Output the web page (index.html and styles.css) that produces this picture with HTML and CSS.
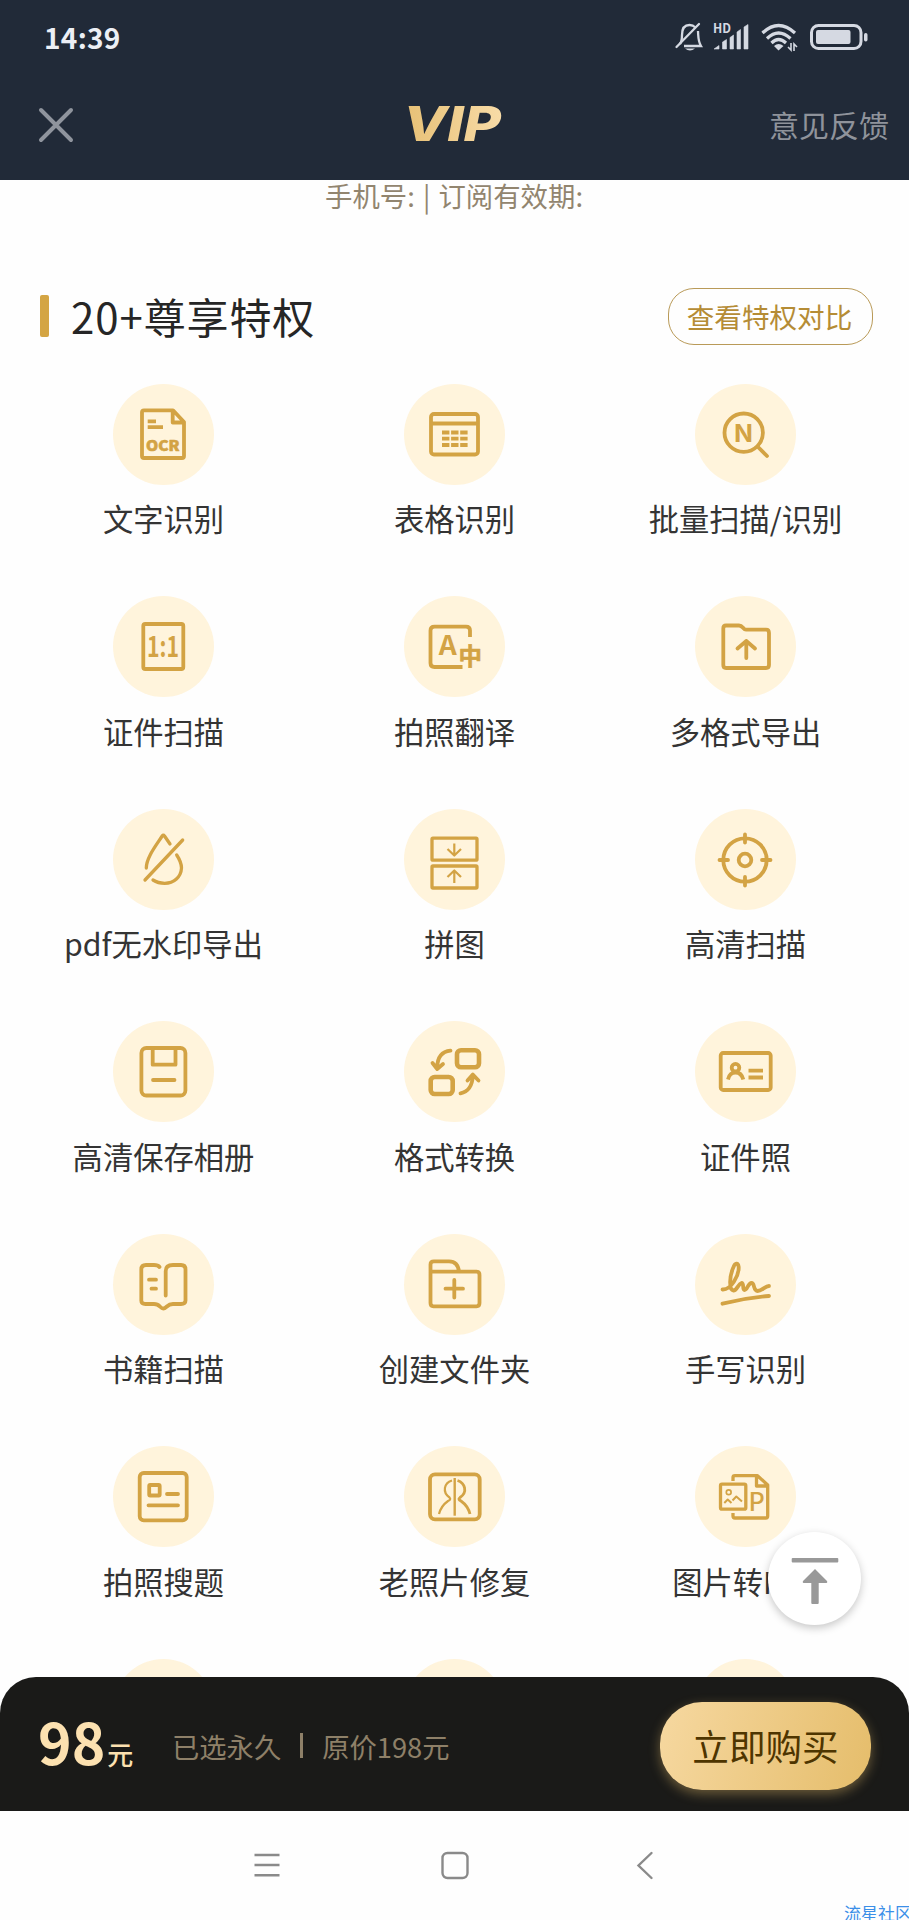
FILE: index.html
```html
<!DOCTYPE html>
<html lang="zh-CN">
<head>
    <meta charset="UTF-8">
    <title>VIP</title>
    <link rel="stylesheet" href="styles.css">
</head>
<body>
<div class="page">
    <header class="header">
        <div class="status-bar">
            <span class="time">14:39</span>
            <div class="status-icons">
                <svg class="bell" width="28" height="30" viewBox="0 0 28 30">
                    <path d="M5 22C7 19 7 16 7 13C7 6 10 3 14.500 3C17 3 19 4 20.500 5.500M23 9C23.500 17 23 19 26 24H9" fill="none" stroke="#d5d9e2" stroke-width="2.300"/>
                    <path d="M1.500 25L24 2" stroke="#d5d9e2" stroke-width="2.300" stroke-linecap="round"/>
                    <path d="M10 26.500H20Q15 30.500 10 26.500Z" fill="#d5d9e2"/>
                </svg>
                <svg class="signal" width="36" height="30" viewBox="0 0 36 30">
                    <text x="0" y="10.500" class="hd" textLength="18" lengthAdjust="spacingAndGlyphs">HD</text>
                    <path d="M1 27L6 23.500V27ZM9.500 27V20L13.500 17.500V27ZM17 27V15.500L20.500 13V27ZM24 27V10L27.500 7.500V27ZM31 27V5L35 2.500V27Z" fill="#d5d9e2" stroke="#d5d9e2" stroke-width=".600"/>
                </svg>
                <svg class="wifi" width="37" height="30" viewBox="0 0 37 30">
                    <g fill="none" stroke="#d5d9e2" stroke-width="3.200">
                        <path d="M1.500 11Q17.500 -4 34 11"/>
                        <path d="M6 16.500Q17.500 5.500 29.500 16.500"/>
                        <path d="M10.500 21Q17.500 14 25 21"/>
                    </g>
                    <path d="M13 24Q17.500 20 22.500 24L17.500 28.500Z" fill="#d5d9e2"/>
                    <path d="M30 21V28L27 25M33 29V22L36 25" fill="none" stroke="#d5d9e2" stroke-width="1.600"/>
                </svg>
                <svg class="battery" width="59" height="30" viewBox="0 0 59 30">
                    <rect x="1.500" y="3.500" width="49.500" height="23" rx="7" fill="none" stroke="#d5d9e2" stroke-width="3"/>
                    <rect x="6" y="8" width="34.500" height="14" rx="2" fill="#d5d9e2"/>
                    <rect x="54" y="11" width="3.500" height="8.500" rx="1.700" fill="#d5d9e2"/>
                </svg>
            </div>
        </div>
        <div class="nav-bar">
            <svg class="close" width="36" height="36" viewBox="0 0 36 36">
                <path d="M3 3L33 33M33 3L3 33" stroke="#8f949d" stroke-width="4" stroke-linecap="round"/>
            </svg>
            <svg class="logo" width="96" height="40" viewBox="0 0 96 40">
                <defs>
                    <linearGradient id="gold" x1="0" x2="1">
                        <stop offset="0" stop-color="#e7c075"/>
                        <stop offset="1" stop-color="#f8dca8"/>
                    </linearGradient>
                </defs>
                <text x="-4" y="36" class="logo-text" fill="url(#gold)" textLength="98" lengthAdjust="spacingAndGlyphs">VIP</text>
            </svg>
            <a class="feedback">意见反馈</a>
        </div>
    </header>

    <main class="content">
        <p class="user-info">手机号: | 订阅有效期:</p>
        <div class="section-title">
            <h2>20+尊享特权</h2>
            <button class="compare-btn">查看特权对比</button>
        </div>

        <div class="grid">
            <div class="item">
                <svg class="icon" viewBox="0 0 101 101">
                    <path d="M31 26.300H60L71 38V72Q71 74 69 74H31Q29 74 29 72V28.300Q29 26.300 31 26.300ZM59.700 27V38.500H71"/>
                    <path d="M34.700 37.300H43M34.700 43.200H50"/>
                    <text x="33" y="67" font-size="14.500" font-weight="900" textLength="33.500" lengthAdjust="spacingAndGlyphs" class="bold">OCR</text>
                </svg>
                <span>文字识别</span>
            </div>
            <div class="item">
                <svg class="icon" viewBox="0 0 101 101">
                    <rect x="27" y="30" width="47" height="40.500" rx="3"/>
                    <path d="M27 39.500H74"/>
                    <path d="M38 48.500H63.700M38 54.700H63.700M38 61H63.700" stroke-dasharray="7.400 1.700"/>
                </svg>
                <span>表格识别</span>
            </div>
            <div class="item">
                <svg class="icon" viewBox="0 0 101 101">
                    <circle cx="48.700" cy="48.700" r="19.200"/>
                    <path d="M63 63L72 72" stroke-linecap="round"/>
                    <text x="38.200" y="57.700" font-size="24.500" font-weight="700" textLength="20.500" lengthAdjust="spacingAndGlyphs">N</text>
                </svg>
                <span>批量扫描/识别</span>
            </div>

            <div class="item">
                <svg class="icon" viewBox="0 0 101 101">
                    <rect x="30.300" y="28" width="40" height="45" rx="2"/>
                    <text x="34" y="61.300" font-size="28" font-weight="700" textLength="32" lengthAdjust="spacingAndGlyphs">1:1</text>
                </svg>
                <span>证件扫描</span>
            </div>
            <div class="item">
                <svg class="icon" viewBox="0 0 101 101">
                    <path d="M66 41V34.500Q66 30.700 62 30.700H30.500Q26.500 30.700 26.500 34.500V67Q26.500 71 30.500 71H58.500"/>
                    <text x="34.700" y="59.300" font-size="27" font-weight="700" textLength="18" lengthAdjust="spacingAndGlyphs">A</text>
                    <text x="54.500" y="69" font-size="23.500" font-weight="700" class="bold">中</text>
                </svg>
                <span>拍照翻译</span>
            </div>
            <div class="item">
                <svg class="icon" viewBox="0 0 101 101">
                    <path d="M31 29.500H44C48 29.500 48 33.700 51 33.700H71Q74 33.700 74 37V69Q74 72 71 72H31Q28.300 72 28.300 69V32.500Q28.300 29.500 31 29.500Z"/>
                    <path d="M51.300 62V45M42.500 52.500L51.300 45L60 52.500" stroke-linecap="round"/>
                </svg>
                <span>多格式导出</span>
            </div>

            <div class="item">
                <svg class="icon thin" viewBox="0 0 101 101">
                    <path d="M57 35L51.500 27Q50.300 25.500 49.200 27C42 38 33.300 49 33.300 59" stroke-linecap="round"/>
                    <path d="M69.700 31L32 71" stroke-linecap="round"/>
                    <path d="M63.700 46C67 51 68.500 55 68.500 59C68 68 61 74.300 51.700 74.300Q45 74.300 40 71" stroke-linecap="round"/>
                </svg>
                <span>pdf无水印导出</span>
            </div>
            <div class="item">
                <svg class="icon thin" viewBox="0 0 101 101">
                    <rect x="28" y="29.200" width="45" height="22" rx="1"/>
                    <rect x="28" y="57" width="45" height="22" rx="1"/>
                    <path d="M50.300 34.500V46M43.500 40L50.300 46.500L57 40M50.300 74V62M43.500 68L50.300 61.500L57 68" stroke-width="2.200"/>
                </svg>
                <span>拼图</span>
            </div>
            <div class="item">
                <svg class="icon" viewBox="0 0 101 101">
                    <circle cx="50" cy="51" r="21.700"/>
                    <circle cx="50" cy="51" r="6.300"/>
                    <path d="M50 25.500V33.500M50 68V76.500M24.500 51H33M67 51H75.500" stroke-linecap="round"/>
                </svg>
                <span>高清扫描</span>
            </div>

            <div class="item">
                <svg class="icon" viewBox="0 0 101 101">
                    <rect x="28.400" y="27" width="44" height="47.500" rx="5"/>
                    <path d="M39.700 27V43.700H62.500V27"/>
                    <path d="M40 59H61.500" stroke-linecap="round"/>
                </svg>
                <span>高清保存相册</span>
            </div>
            <div class="item">
                <svg class="icon thick" viewBox="0 0 101 101">
                    <rect x="53" y="29.300" width="22" height="17" rx="4"/>
                    <rect x="26.700" y="56" width="22" height="17" rx="4"/>
                    <g stroke-width="3.800" stroke-linecap="round" stroke-linejoin="round">
                        <path d="M46.500 29.700Q33.500 31 33.200 46.500M28.500 42L33.200 48L39 43"/>
                        <path d="M56.500 72.300Q68 70 68.800 55M63.500 59.500L68.800 53.500L74.500 59.500"/>
                    </g>
                </svg>
                <span>格式转换</span>
            </div>
            <div class="item">
                <svg class="icon" viewBox="0 0 101 101">
                    <rect x="25.700" y="32" width="50" height="37" rx="2.500"/>
                    <circle cx="40.500" cy="46.700" r="3.800"/>
                    <path d="M33 58.500Q34.500 51.500 40.500 51.500Q46.500 51.500 48.300 58.500"/>
                    <path d="M53.500 49.700H68M53.500 56.500H68"/>
                </svg>
                <span>证件照</span>
            </div>

            <div class="item">
                <svg class="icon" viewBox="0 0 101 101">
                    <path d="M46.500 33Q45 31 41 31H33Q28.300 31 28.300 35.500V66.500Q28.300 70 32.500 70H41C47 70 47 74.500 50.300 74.500C53.500 74.500 54 70 60 70H68Q72.500 70 72.500 66.500V35.500Q72.500 31 68 31H60Q52.700 31 52.700 37V61.500" stroke-linecap="round"/>
                    <path d="M36 45.700H43M38.500 54.700H43" stroke-linecap="round"/>
                </svg>
                <span>书籍扫描</span>
            </div>
            <div class="item">
                <svg class="icon" viewBox="0 0 101 101">
                    <path d="M26.500 37.700V30.500Q26.500 27.300 30 27.300H45Q54 27.300 55 37.700M26.500 37.700H72.500Q75.500 37.700 75.500 41V69Q75.500 72.300 72.500 72.300H29.500Q26.500 72.300 26.500 69Z"/>
                    <path d="M50.300 46V63.500M41.500 54.700H59" stroke-linecap="round"/>
                </svg>
                <span>创建文件夹</span>
            </div>
            <div class="item">
                <svg class="icon" viewBox="0 0 101 101">
                    <path d="M27.500 55.500C36 56 44 42 43.700 33C43 28 40 29 38.500 33C34 43 34 56 38.500 56.500C42 56.500 43 50 46.500 49C49.500 49 47 56 49.500 56C52.500 56 53 49 56.500 49C60 49 58 57 62.500 57C67 57 70 52 74 52" stroke-linecap="round"/>
                    <path d="M27.500 69.700Q50 64 74 62" stroke-linecap="round"/>
                </svg>
                <span>手写识别</span>
            </div>

            <div class="item">
                <svg class="icon" viewBox="0 0 101 101">
                    <rect x="26.700" y="27" width="47" height="47.300" rx="4"/>
                    <rect x="36.200" y="39" width="10.500" height="10.500" rx="1"/>
                    <path d="M54 48H65M35.500 59.300H65" stroke-linecap="round"/>
                </svg>
                <span>拍照搜题</span>
            </div>
            <div class="item">
                <svg class="icon" viewBox="0 0 101 101">
                    <rect x="26" y="28.300" width="49.700" height="45" rx="5"/>
                    <path d="M50.700 32V69.700" stroke-width="2.400"/>
                    <path d="M53.500 34.500C61 37 64 46 56 51.500C54 53 55 54 57 55Q64 60 66 68" stroke-width="2.800"/>
                    <path d="M48 34.500C40 37 38 46 45.500 51.500C47 53 46 54 44 55Q37 60 35 68" stroke-width="2.200"/>
                </svg>
                <span>老照片修复</span>
            </div>
            <div class="item">
                <svg class="icon thin" viewBox="0 0 101 101">
                    <path d="M38 35V31.500Q38 29.700 40 29.700H62.500L72.700 39V70Q72.700 72 70.700 72H40Q38 72 38 70V67M61.500 30V40H72.700"/>
                    <rect x="25.500" y="38.200" width="25.300" height="25" rx="1.500"/>
                    <circle cx="33.700" cy="46.300" r="2.400" stroke-width="1.700"/>
                    <path d="M29.300 57L32.700 53.500L36.500 57M37.500 54.500L41.300 50.500L47 55.500" stroke-width="2"/>
                    <text x="53.500" y="64.500" font-size="25" font-weight="500">P</text>
                </svg>
                <span>图片转PPT</span>
            </div>

            <div class="item"><div class="icon"></div></div>
            <div class="item"><div class="icon"></div></div>
            <div class="item"><div class="icon"></div></div>
        </div>
    </main>

    <div class="buy-bar">
        <div class="price">98<small>元</small></div>
        <div class="plan"><span>已选永久</span><i></i><span>原价198元</span></div>
        <button class="buy-btn">立即购买</button>
    </div>

    <footer class="system-nav">
        <svg width="28" height="30" viewBox="0 0 28 30">
            <path d="M1.500 4H26.500M1.500 14H26.500M1.500 24.300H26.500"/>
        </svg>
        <svg width="28" height="30" viewBox="0 0 28 30">
            <rect x="1.500" y="2" width="25" height="25" rx="5"/>
        </svg>
        <svg width="28" height="30" viewBox="0 0 28 30">
            <path d="M22.500 2L9.500 14.500L22.500 27" stroke-linecap="round"/>
        </svg>
    </footer>

    <button class="to-top">
        <svg width="50" height="50" viewBox="0 0 50 50">
            <rect x="1.700" y="4" width="46.600" height="4.600" rx="1"/>
            <path d="M25 15L37 27Q38 29 35.500 29H28.700V49Q28.700 50 27.700 50H22.300Q21.300 50 21.300 49V29H14.500Q12 29 13 27Z"/>
        </svg>
    </button>
    <span class="watermark">流星社区</span>
</div>
</body>
</html>
```

FILE: styles.css
```css
* {
    box-sizing: border-box;
}
body {
    margin: 0;
    font-family: "Noto Sans CJK SC", sans-serif;
    background-color: #fefefe;
}
button {
    font-family: inherit;
    padding: 0;
}
svg {
    overflow: visible;
}
.page {
    position: relative;
    display: flex;
    flex-direction: column;
    width: 909px;
    height: 1920px;
    overflow: hidden;
}

/* header */
.header {
    height: 180px;
    background-color: #212a38;
}
.status-bar {
    display: flex;
    justify-content: space-between;
    height: 74px;
    padding: 22px 40px 0 44px;
}
.time {
    font-size: 28px;
    line-height: 30px;
    font-weight: 700;
    letter-spacing: 0.3px;
    color: #eceff5;
}
.status-icons {
    display: flex;
}
.signal {
    margin-left: 10px;
}
.wifi {
    margin-left: 12px;
}
.battery {
    margin-left: 12px;
}
.hd {
    font-size: 12.5px;
    font-weight: 700;
    fill: #d5d9e2;
}
.nav-bar {
    display: flex;
    align-items: center;
    justify-content: space-between;
    height: 102px;
    padding: 0 20px 0 38px;
}
.logo {
    margin-left: 67px;
}
.logo-text {
    font-family: Inter, sans-serif;
    font-size: 48px;
    font-weight: 800;
    font-style: italic;
}
.feedback {
    margin-top: -3px;
    font-size: 30px;
    color: #8f939b;
}

/* content, runs on under the buy bar */
.content {
    flex: 1;
    min-height: 0;
}
.user-info {
    margin: 0;
    height: 106px;
    text-align: center;
    font-size: 27.4px;
    line-height: 31px;
    word-spacing: 2px;
    color: #92856f;
    padding-right: 1px;
}
.section-title {
    display: flex;
    align-items: center;
    height: 60px;
    padding: 0 36px 0 40px;
}
.section-title h2 {
    flex: 1;
    display: flex;
    align-items: center;
    margin: 0;
    font-size: 42px;
    line-height: 60px;
    font-weight: 400;
    letter-spacing: 0.9px;
    color: #262626;
}
.section-title h2::before {
    content: "";
    width: 9px;
    height: 42px;
    margin-right: 22px;
    border-radius: 2px;
    background-color: #d4a544;
}
.compare-btn {
    width: 205px;
    height: 57px;
    padding-right: 2px;
    border: 1px solid #b99a58;
    border-radius: 26px;
    background: none;
    font-size: 27.6px;
    color: #b58c35;
}
.grid {
    display: grid;
    grid-template-columns: repeat(3, 291px);
    grid-auto-rows: 212.5px;
    padding: 37.500px 18px 0;
}
.item {
    display: flex;
    flex-direction: column;
    align-items: center;
}
.icon {
    flex: none;
    width: 101px;
    height: 101px;
    border-radius: 50%;
    background-color: #fff4dc;
    fill: none;
    stroke: #d3a344;
    stroke-width: 3.8;
    stroke-linejoin: round;
}
.icon text {
    fill: #d3a344;
    stroke: none;
}
.icon text.bold {
    stroke: #d3a344;
    stroke-width: 0.6;
}
.icon.thin {
    stroke-width: 3.3;
}
.icon.thick {
    stroke-width: 4.6;
}
.item span {
    margin-top: 12.5px;
    font-size: 30.3px;
    line-height: 42px;
    color: #343434;
    white-space: nowrap;
}

/* bottom */
.buy-bar {
    position: relative;
    display: flex;
    align-items: center;
    height: 134px;
    padding: 0 38px;
    border-radius: 36px 36px 0 0;
    background-color: #1a1a18;
}
.price {
    width: 134px;
    margin-top: 6px;
    font-size: 57px;
    line-height: 80px;
    font-weight: 700;
    color: #fce1b0;
    white-space: nowrap;
}
.price small {
    margin-left: 2px;
    font-size: 26px;
    font-weight: 500;
}
.plan {
    flex: 1;
    display: flex;
    align-items: center;
    margin-top: 3px;
    font-size: 27.3px;
    color: #8e8068;
}
.plan i {
    width: 3px;
    height: 25px;
    margin: 0 19px;
    background-color: #8e8068;
}
.buy-btn {
    width: 211px;
    height: 88px;
    margin-top: 3px;
    border: none;
    border-radius: 42px;
    background: linear-gradient(105deg, #f6d8a0, #e5bd6b);
    box-shadow: 0 4px 12px rgba(229, 189, 107, 0.4);
    font-size: 36.6px;
    color: #4e3500;
}
.system-nav {
    position: relative;
    display: flex;
    justify-content: center;
    gap: 160px;
    height: 109px;
    padding-top: 40px;
    background-color: #fefefe;
}
.system-nav svg {
    fill: none;
    stroke: #8a8a8a;
    stroke-width: 2.4;
}

/* floating button over the list */
.to-top {
    position: absolute;
    right: 48px;
    bottom: 295px;
    display: flex;
    align-items: center;
    justify-content: center;
    width: 93px;
    height: 93px;
    border: none;
    border-radius: 50%;
    background-color: #fff;
    box-shadow: 0 3px 9px rgba(0, 0, 0, 0.22);
}
.to-top svg {
    fill: #999;
}
.watermark {
    position: absolute;
    right: -3px;
    bottom: -5px;
    font-size: 17px;
    line-height: 25px;
    color: #3b8fe8;
}
```
